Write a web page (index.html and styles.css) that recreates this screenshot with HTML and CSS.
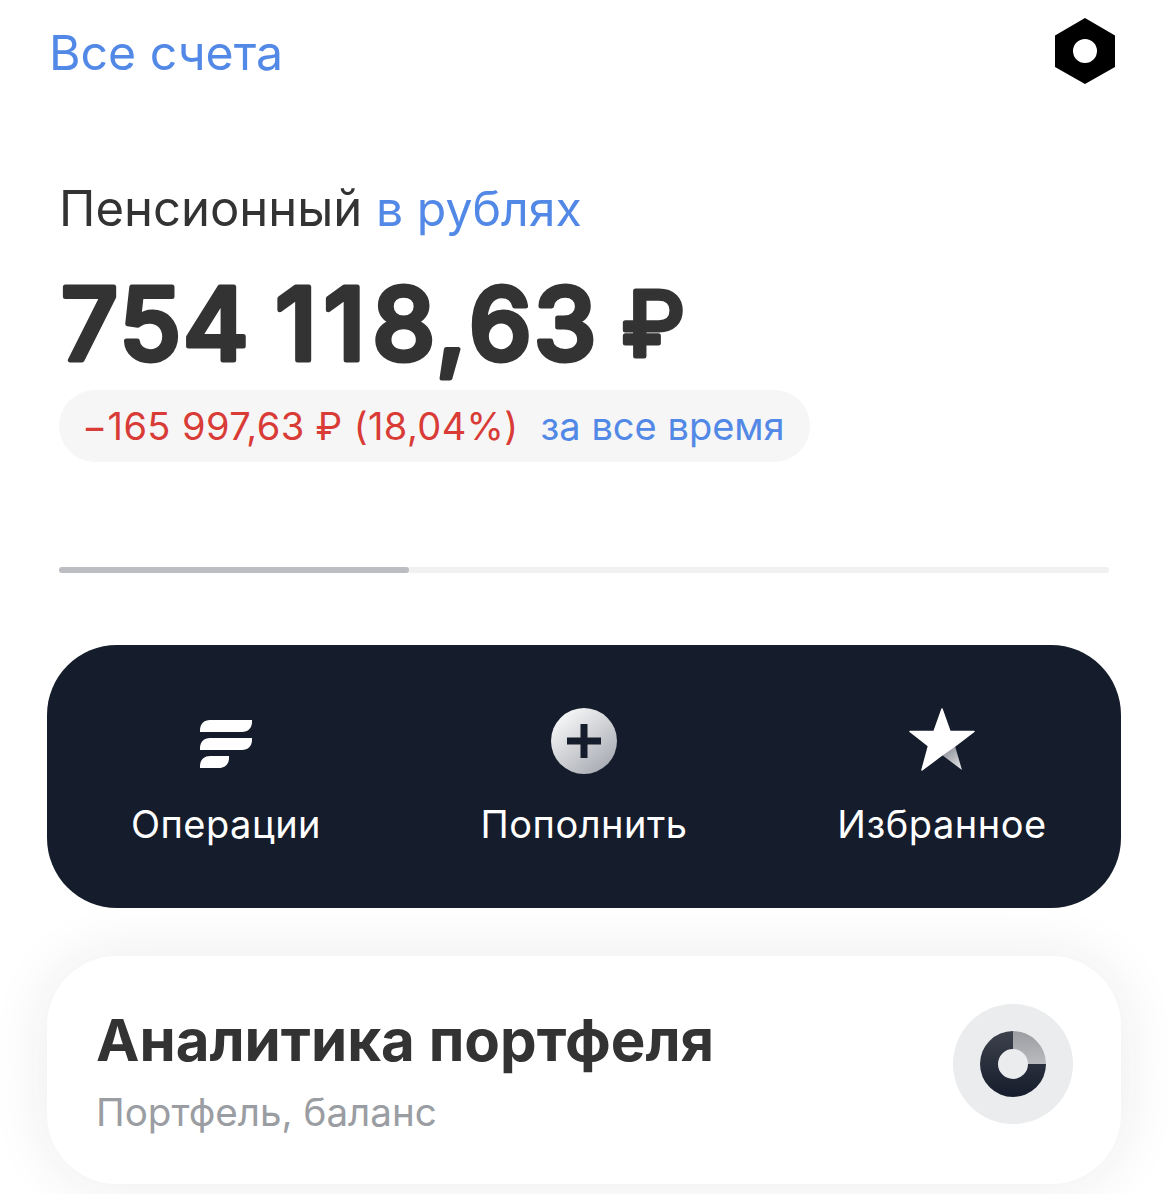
FILE: index.html
```html
<!DOCTYPE html>
<html lang="ru">
<head>
<meta charset="utf-8">
<title>Пенсионный</title>
<link rel="stylesheet" href="styles.css">
</head>
<body>
<main class="screen">
  <header class="topbar">
    <a class="link accounts">Все счета</a>
    <svg class="settings" width="62" height="66" viewBox="0 0 62 66" aria-hidden="true">
      <path fill-rule="evenodd" fill="#000" d="M31 0 61 17.500V49L31 66 1 49V17.500ZM31 21A12 12 0 1 0 31 45 12 12 0 1 0 31 21Z"/>
    </svg>
  </header>

  <section class="summary">
    <h1 class="account-name">Пенсионный <span class="accent account-currency">в рублях</span></h1>
    <svg class="balance" width="760" height="150" viewBox="0 0 760 150">
      <text class="balance-text" x="2" y="95" dx="0 0 0 0 -4 5 5 1 3 0 0 -5">754 118,63 <tspan class="balance-sign" dy="-4">₽</tspan></text>
    </svg>
    <div class="change">
      <span class="loss">−165 997,63 ₽ (18,04%)</span>
      <span class="accent">за все время</span>
    </div>
  </section>

  <div class="progress"><div class="progress-fill"></div></div>

  <nav class="actions">
    <a class="action">
      <svg class="action-icon" width="66" height="66" viewBox="0 0 66 66" aria-hidden="true">
        <g fill="#fff">
          <path d="M7 24V22C7 16 11 12 17 12H59V14C59 20 55 24 49 24Z"/>
          <path d="M7 42V40C7 34 11 30 17 30H59V32C59 38 55 42 49 42Z"/>
          <path d="M7 60V58C7 52 11 48 17 48H36V50C36 56 32 60 26 60Z"/>
        </g>
      </svg>
      <span>Операции</span>
    </a>
    <a class="action">
      <svg class="action-icon" width="66" height="66" viewBox="0 0 66 66" aria-hidden="true">
        <defs>
          <linearGradient id="disc" x1="0.2" y1="0.1" x2="0.85" y2="0.9">
            <stop offset="0" stop-color="#f4f5f6"/>
            <stop offset="1" stop-color="#a9acb3"/>
          </linearGradient>
        </defs>
        <circle cx="33" cy="33" r="33" fill="url(#disc)"/>
        <path fill="#151c2b" d="M29.500 16H36.500V29.500H50V36.500H36.500V50H29.500V36.500H16V29.500H29.500Z"/>
      </svg>
      <span>Пополнить</span>
    </a>
    <a class="action">
      <svg class="action-icon" width="66" height="66" viewBox="0 0 66 66" aria-hidden="true">
        <defs>
          <linearGradient id="facet" x1="0.2" y1="0.1" x2="0.8" y2="1">
            <stop offset="0" stop-color="#8f929b"/>
            <stop offset="1" stop-color="#dfe0e3"/>
          </linearGradient>
        </defs>
        <path fill="url(#facet)" d="M33 47 46 38 53 62Z"/>
        <path fill="#fff" stroke="#fff" stroke-width="1.500" stroke-linejoin="round" d="M33 1 41 23.500H65L46 38 33 47 13 62 19.500 38 1 23.500H25Z"/>
      </svg>
      <span>Избранное</span>
    </a>
  </nav>

  <section class="analytics">
    <div class="analytics-text">
      <h2 class="analytics-title">Аналитика портфеля</h2>
      <p class="analytics-sub">Портфель, баланс</p>
    </div>
    <div class="analytics-badge">
      <svg width="66" height="66" viewBox="0 0 66 66" aria-hidden="true">
        <defs>
          <linearGradient id="ring" x1="0" y1="0" x2="0" y2="1">
            <stop offset="0" stop-color="#3d424d"/>
            <stop offset="1" stop-color="#151c2b"/>
          </linearGradient>
          <linearGradient id="slice" x1="0" y1="0" x2="0" y2="1">
            <stop offset="0" stop-color="#9a9ca1"/>
            <stop offset="1" stop-color="#b9bbbe"/>
          </linearGradient>
        </defs>
        <path fill="url(#ring)" d="M33 0V18A15 15 0 1 0 48 33H66A33 33 0 1 1 33 0Z"/>
        <path fill="url(#slice)" d="M33 0A33 33 0 0 1 66 33H48A15 15 0 0 0 33 18Z"/>
      </svg>
    </div>
  </section>
</main>
</body>
</html>
```

FILE: styles.css
```css
* {
  box-sizing: border-box;
}

html,
body {
  margin: 0;
  background: #fff;
}

.screen {
  width: 1169px;
  height: 1194px;
  overflow: hidden;
  font-family: Inter, "Liberation Sans", sans-serif;
  color: #333;
}

.topbar {
  display: flex;
  justify-content: space-between;
  align-items: flex-start;
  height: 176px;
  padding: 18px 53px 0 49px;
}

.accounts {
  font-size: 48.200px;
  line-height: 70px;
  color: #5288e6;
}

.accent {
  color: #5288e6;
}

.settings {
  display: block;
}

.summary {
  padding-left: 59px;
}

.account-name {
  margin: 0;
  font-size: 49px;
  font-weight: 400;
  line-height: 66px;
}

.account-currency {
  font-size: 48.200px;
}

/* Rounded stroke over a medium weight gives the amount its soft terminals */
.balance {
  display: block;
  margin: 23px 0 -35px;
  overflow: visible;
}

.balance-text {
  font-size: 100px;
  font-weight: 500;
  letter-spacing: 2px;
  fill: #333;
  stroke: #333;
  stroke-width: 5px;
  stroke-linejoin: round;
  stroke-linecap: round;
}

.balance-sign {
  font-size: 90px;
  font-weight: 400;
}

.change {
  display: inline-flex;
  gap: 22px;
  align-items: center;
  height: 72px;
  margin-top: 10px;
  padding: 0 25px 0 23px;
  border-radius: 36px;
  background: #f6f6f6;
  font-size: 38px;
}

.loss {
  color: #d93b36;
  letter-spacing: 0.400px;
}

.progress {
  height: 6px;
  margin: 105px 60px 0 59px;
  border-radius: 3px;
  background: #f1f1f2;
}

.progress-fill {
  width: 350px;
  height: 100%;
  border-radius: 3px;
  background: #bcbdc3;
}

.actions {
  display: grid;
  grid-template-columns: repeat(3, 1fr);
  height: 263px;
  margin: 72px 48px 0 47px;
  padding-top: 63px;
  border-radius: 70px;
  background: #151c2b;
  color: #fff;
}

.action {
  display: flex;
  flex-direction: column;
  align-items: center;
  font-size: 38px;
  line-height: 46px;
  letter-spacing: 0.500px;
}

.action-icon {
  display: block;
  margin-bottom: 27px;
}

.analytics {
  display: flex;
  justify-content: space-between;
  height: 228px;
  margin: 48px 48px 0 47px;
  padding: 48px 48px 0 49px;
  border-radius: 70px;
  background: #fff;
  box-shadow: 0 0 60px rgba(30, 36, 50, 0.09);
}

.analytics-title {
  margin: 2px 0 0;
  font-size: 58.200px;
  font-weight: 700;
  line-height: 68px;
}

.analytics-sub {
  margin: 16px 0 0;
  font-size: 38.600px;
  line-height: 44px;
  color: #9a9da2;
}

.analytics-badge {
  display: flex;
  justify-content: center;
  align-items: center;
  width: 120px;
  height: 120px;
  border-radius: 50%;
  background: #eaecee;
}
```
